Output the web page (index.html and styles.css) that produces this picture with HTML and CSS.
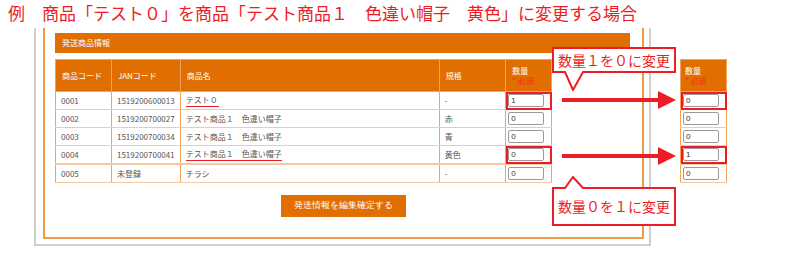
FILE: index.html
```html
<!DOCTYPE html>
<html lang="ja">
<head>
    <meta charset="UTF-8">
    <title>数量変更の例</title>
    <link rel="stylesheet" href="styles.css">
</head>
<body>
    <h1 class="title">例　商品「テスト０」を商品「テスト商品１　色違い帽子　黄色」に変更する場合</h1>

    <div class="stage">
        <div class="frame-outer">
            <div class="frame-inner">
                <div class="section-bar">発送商品情報</div>
                <table class="items">
                    <colgroup>
                        <col class="c-code"><col class="c-jan"><col class="c-name"><col class="c-spec"><col class="c-qty">
                    </colgroup>
                    <thead>
                        <tr>
                            <th>商品コード</th>
                            <th>JANコード</th>
                            <th>商品名</th>
                            <th>規格</th>
                            <th class="qty-head">数量<span class="req">* 必須</span></th>
                        </tr>
                    </thead>
                    <tbody>
                        <tr>
                            <td>0001</td><td>1519200600013</td>
                            <td><span class="mark">テスト０ </span></td><td>-</td>
                            <td class="hl"><input class="qty" value="1"></td>
                        </tr>
                        <tr>
                            <td>0002</td><td>1519200700027</td>
                            <td>テスト商品１　色違い帽子</td><td>赤</td>
                            <td><input class="qty" value="0"></td>
                        </tr>
                        <tr>
                            <td>0003</td><td>1519200700034</td>
                            <td>テスト商品１　色違い帽子</td><td>青</td>
                            <td><input class="qty" value="0"></td>
                        </tr>
                        <tr class="thick">
                            <td>0004</td><td>1519200700041</td>
                            <td><span class="mark">テスト商品１　色違い帽子</span></td><td>黄色</td>
                            <td class="hl"><input class="qty" value="0"></td>
                        </tr>
                        <tr>
                            <td>0005</td><td>未登録</td>
                            <td>チラシ</td><td>-</td>
                            <td><input class="qty" value="0"></td>
                        </tr>
                    </tbody>
                </table>
                <button class="confirm">発送情報を編集確定する</button>
            </div>
        </div>

        <table class="items after">
            <thead>
                <tr><th class="qty-head">数量<span class="req">* 必須</span></th></tr>
            </thead>
            <tbody>
                <tr><td class="hl"><input class="qty" value="0"></td></tr>
                <tr><td><input class="qty" value="0"></td></tr>
                <tr><td><input class="qty" value="0"></td></tr>
                <tr class="thick"><td class="hl"><input class="qty" value="1"></td></tr>
                <tr><td><input class="qty" value="0"></td></tr>
            </tbody>
        </table>

        <!-- annotations -->
        <div class="callout callout-top">
            <svg width="124" height="44" viewBox="0 0 124 44">
                <path d="M1 1 H123 V25 H31 L21 43 L13 25 H1 Z" fill="#fff" stroke="#ee1c24" stroke-width="2"/>
            </svg>
            <span class="callout-text">数量１を０に変更</span>
        </div>
        <svg class="arrow arrow-1" width="114" height="18" viewBox="0 0 114 18">
            <rect x="0" y="7" width="98" height="4" fill="#ee1c24"/>
            <polygon points="96,0 114,9 96,18" fill="#ee1c24"/>
        </svg>
        <svg class="arrow arrow-2" width="114" height="18" viewBox="0 0 114 18">
            <rect x="0" y="7" width="98" height="4" fill="#ee1c24"/>
            <polygon points="96,0 114,9 96,18" fill="#ee1c24"/>
        </svg>
        <div class="callout callout-bottom">
            <svg width="124" height="50" viewBox="0 0 124 50">
                <path d="M1 12 H13 L21 1 L31 12 H123 V49 H1 Z" fill="#fff" stroke="#ee1c24" stroke-width="2"/>
            </svg>
            <span class="callout-text">数量０を１に変更</span>
        </div>
    </div>
</body>
</html>
```

FILE: styles.css
```css
body {
    margin: 0;
    background-color: #fff;
    font-family: "Noto Sans CJK JP", "Noto Sans", sans-serif;
    color: #555;
}
.title {
    margin: 0;
    padding-left: 8px;
    height: 28px;
    line-height: 26px;
    font-size: 17px;
    font-weight: normal;
    color: #ee1c24;
    white-space: nowrap;
}
.stage {
    position: relative;
    display: flex;
    align-items: flex-start;
}
.frame-outer {
    box-sizing: border-box;
    width: 617px;
    margin-left: 34px;
    padding: 0 5px 5px 7px;
    border: 2px solid #cfcfcf;
    border-top: none;
}
.frame-inner {
    padding: 5px 0 20px 0;
    border: 2px solid #f09a48;
    border-top: none;
}
.section-bar {
    width: 568px;
    height: 20px;
    margin-left: 10px;
    padding-left: 7px;
    background-color: #e06e00;
    color: #fff;
    font-size: 8px;
    line-height: 20px;
}
.items {
    border-collapse: collapse;
    font-size: 8px;
}
.frame-inner .items {
    width: 497px;
    margin: 6px 0 0 10px;
}
.c-code { width: 57px; }
.c-jan { width: 61px; }
.c-name { width: 265px; }
.c-spec { width: 68px; }
.c-qty { width: 46px; }
.items th {
    height: 31px;
    padding: 0 6px;
    background-color: #e06e00;
    color: #fff;
    font-weight: normal;
    text-align: left;
    border: 1px solid #f0a45e;
}
.items td {
    height: 17px;
    padding: 0 5px;
    border-left: 1px solid #f0a45e;
    border-right: 1px solid #f0a45e;
    border-top: 1px solid #f6c9a2;
    border-bottom: 1px solid #f6c9a2;
    white-space: nowrap;
}
.items tr.thick td {
    border-bottom: 2px solid #f6c9a2;
}
.items td.hl {
    outline: 2px solid #ee1c24;
    outline-offset: -2px;
}
.mark {
    display: inline-block;
    line-height: 10px;
    padding-bottom: 1px;
    border-bottom: 1px solid #ee1c24;
    white-space: pre;
}
.qty-head {
    line-height: 10px;
}
.req {
    display: block;
    color: #ff2a1a;
}
.qty {
    box-sizing: border-box;
    display: block;
    width: 36px;
    height: 13px;
    margin: 0;
    padding: 0 2px;
    border: 1px solid #9a9a9a;
    border-radius: 2px;
    font-family: "Liberation Sans", sans-serif;
    font-size: 8px;
    color: #333;
}
.items td:has(.qty) {
    padding: 0 2px;
}
.after {
    width: 47px;
    margin: 31px 0 0 29px;
}
.after th,
.after td {
    padding-left: 4px;
}
.confirm {
    display: block;
    width: 125px;
    height: 22px;
    margin: 12px auto 0;
    padding: 0;
    border: none;
    background-color: #e06e00;
    color: #fff;
    font-family: "Liberation Serif", serif;
    font-size: 8.5px;
}
.callout {
    position: absolute;
    left: 552px;
}
.callout svg {
    display: block;
}
.callout-text {
    position: absolute;
    left: 0;
    width: 124px;
    text-align: center;
    font-size: 14px;
    color: #ee1c24;
    white-space: nowrap;
}
.callout-top {
    top: 19px;
}
.callout-top .callout-text {
    top: 1px;
    line-height: 24px;
}
.callout-bottom {
    top: 148px;
}
.callout-bottom .callout-text {
    top: 12px;
    line-height: 37px;
}
.arrow {
    position: absolute;
    left: 562px;
}
.arrow-1 {
    top: 63px;
}
.arrow-2 {
    top: 119px;
}
```
